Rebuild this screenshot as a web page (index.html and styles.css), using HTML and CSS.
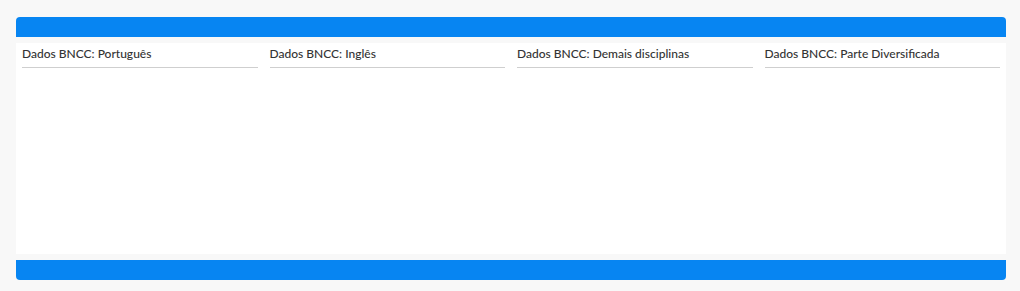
FILE: index.html
```html
<!DOCTYPE html>
<html lang="pt-BR">
<head>
<meta charset="utf-8">
<link rel="stylesheet" href="styles.css">
</head>
<body>
<div class="panel">
  <div class="bar bar-top"></div>
  <div class="content">
    <div class="col"><div class="heading">Dados BNCC: Português</div></div>
    <div class="col"><div class="heading">Dados BNCC: Inglês</div></div>
    <div class="col"><div class="heading">Dados BNCC: Demais disciplinas</div></div>
    <div class="col"><div class="heading">Dados BNCC: Parte Diversificada</div></div>
  </div>
  <div class="bar bar-bottom"></div>
</div>
</body>
</html>
```
FILE: styles.css
```css
html, body {
  margin: 0;
  padding: 0;
  background: #f8f8f8;
  font-family: Lato, "Open Sans", sans-serif;
}
.panel {
  margin: 17px 14px 0 16px;
  width: 990px;
  display: flex;
  flex-direction: column;
  gap: 6px;
}
.bar {
  height: 20px;
  background: #0785f2;
}
.bar-top {
  border-radius: 4px 4px 0 0;
}
.bar-bottom {
  border-radius: 0 0 4px 4px;
}
.content {
  background: #fff;
  height: 211px;
  display: grid;
  grid-template-columns: repeat(4, 1fr);
  align-items: start;
}
.col {
  padding: 0 6px;
}
.heading {
  font-size: 12px;
  font-weight: 500;
  color: #333;
  padding: 3px 0 6px 0;
  line-height: 15px;
  border-bottom: 1px solid #cfcfcf;
}
```
